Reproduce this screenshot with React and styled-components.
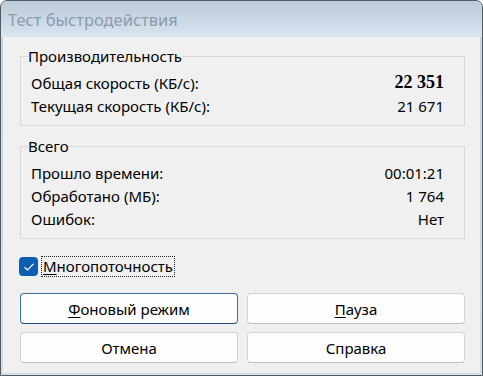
import styled, { createGlobalStyle } from "styled-components";

const GlobalStyle = createGlobalStyle`
  html, body {
    margin: 0;
    padding: 0;
    background: #ffffff;
  }
  body {
    font-family: "Noto Sans", "Open Sans", sans-serif;
  }
`;

const Window = styled.div`
  width: 483px;
  height: 376px;
  box-sizing: border-box;
  border: 1px solid #545a62;
  border-radius: 7px 7px 0 0;
  background: linear-gradient(180deg, #b7c7d7 0%, #c6d4e2 40px, #d2dde8 100%);
  display: flex;
  flex-direction: column;
  overflow: hidden;
`;

const TitleBar = styled.div`
  height: 36px;
  flex: none;
  padding-left: 7px;
  display: flex;
  align-items: center;
  font-size: 16.5px;
  color: #8c9cab;
  background: linear-gradient(180deg, #bccbd9 0%, #cbd8e5 55%, #d9e5f1 100%);
`;

const Body = styled.div`
  flex: 1;
  margin: 0 2px 2px;
  background: #f0f0f0;
  padding: 9px 15px 0 17px;
  display: flex;
  flex-direction: column;
`;

const Group = styled.fieldset`
  margin: 0 0 ${(p) => p.$gap || 0}px;
  padding: 5px 20px 8px 10px;
  border: 1px solid #d8d8d8;
  border-radius: 0;
  min-width: 0;
`;

const Legend = styled.legend`
  padding: 0;
  margin-left: -3px;
  font-size: 15px;
  line-height: 20px;
  color: #000;
`;

const Row = styled.div`
  display: flex;
  justify-content: space-between;
  align-items: center;
  height: 23px;
  font-size: 15px;
  color: #000;
`;

const Value = styled.span`
  ${(p) =>
    p.$strong &&
    `
    font-family: "Liberation Serif", "Times New Roman", serif;
    font-weight: bold;
    font-size: 18px;
  `}
`;

const CheckRow = styled.label`
  display: flex;
  align-items: center;
  gap: 4px;
  margin: 17px 0 0 -1px;
  height: 21px;
`;

const Box = styled.span`
  width: 19px;
  height: 19px;
  border-radius: 4px;
  background: #0b5fb3;
  display: flex;
  align-items: center;
  justify-content: center;
`;

const CheckText = styled.span`
  font-size: 15px;
  line-height: 19px;
  color: #000;
  outline: 1px dotted #222;
  padding: 0 1px;
`;

const Buttons = styled.div`
  display: grid;
  grid-template-columns: 1fr 1fr;
  column-gap: 9px;
  row-gap: 8px;
  margin: 16px 0 0;
`;

const Button = styled.button`
  height: 31px;
  box-sizing: border-box;
  border: 1px solid ${(p) => (p.$primary ? "#3d6f9c" : "#d3d3d3")};
  border-bottom-color: ${(p) => (p.$primary ? "#1f4e7a" : "#bdbdbd")};
  border-radius: 4px;
  background: #fdfdfd;
  font-family: "Noto Sans", "Open Sans", sans-serif;
  font-size: 15px;
  color: #000;
  padding: 0;
`;

const Key = styled.u`
  text-underline-offset: 2px;
`;

export default function App() {
  return (
    <>
      <GlobalStyle />
      <Window>
        <TitleBar>Тест быстродействия</TitleBar>
        <Body>
          <Group $gap={10}>
            <Legend>Производительность</Legend>
            <Row>
              <span>Общая скорость (КБ/с):</span>
              <Value $strong>22 351</Value>
            </Row>
            <Row>
              <span>Текущая скорость (КБ/с):</span>
              <Value>21 671</Value>
            </Row>
          </Group>
          <Group>
            <Legend>Всего</Legend>
            <Row>
              <span>Прошло времени:</span>
              <Value>00:01:21</Value>
            </Row>
            <Row>
              <span>Обработано (МБ):</span>
              <Value>1 764</Value>
            </Row>
            <Row>
              <span>Ошибок:</span>
              <Value>Нет</Value>
            </Row>
          </Group>
          <CheckRow>
            <Box>
              <svg width="12" height="10" viewBox="0 0 12 10">
                <path d="M1.5 5.2 L4.5 8 L10.5 1.8" fill="none" stroke="#fff" strokeWidth="1.2" />
              </svg>
            </Box>
            <CheckText>
              <Key>М</Key>ногопоточность
            </CheckText>
          </CheckRow>
          <Buttons>
            <Button $primary>
              <Key>Ф</Key>оновый режим
            </Button>
            <Button>
              <Key>П</Key>ауза
            </Button>
            <Button>Отмена</Button>
            <Button>Справка</Button>
          </Buttons>
        </Body>
      </Window>
    </>
  );
}
